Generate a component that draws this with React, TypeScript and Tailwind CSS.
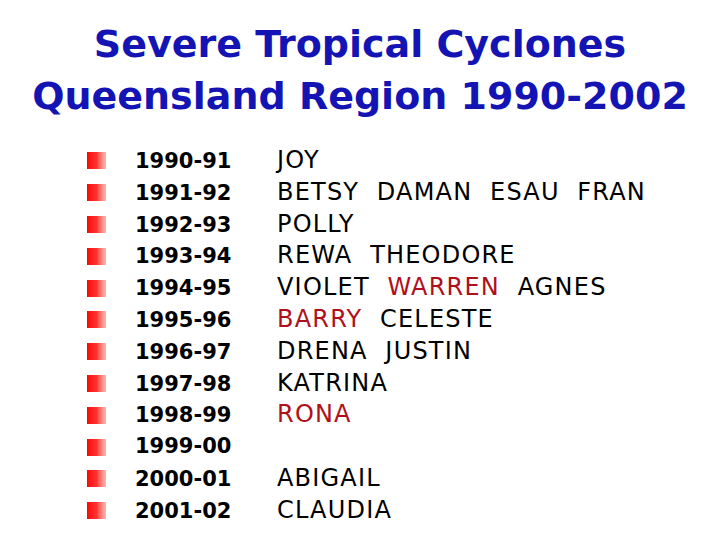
import React from "react";

const rows: { year: string; names: { t: string; red?: boolean }[] }[] = [
  { year: "1990-91", names: [{ t: "JOY" }] },
  { year: "1991-92", names: [{ t: "BETSY  DAMAN  ESAU  FRAN" }] },
  { year: "1992-93", names: [{ t: "POLLY" }] },
  { year: "1993-94", names: [{ t: "REWA  THEODORE" }] },
  { year: "1994-95", names: [{ t: "VIOLET  " }, { t: "WARREN", red: true }, { t: "  AGNES" }] },
  { year: "1995-96", names: [{ t: "BARRY", red: true }, { t: "  CELESTE" }] },
  { year: "1996-97", names: [{ t: "DRENA  JUSTIN" }] },
  { year: "1997-98", names: [{ t: "KATRINA" }] },
  { year: "1998-99", names: [{ t: "RONA", red: true }] },
  { year: "1999-00", names: [] },
  { year: "2000-01", names: [{ t: "ABIGAIL" }] },
  { year: "2001-02", names: [{ t: "CLAUDIA" }] },
];

export default function App() {
  return (
    <div
      className="w-[720px] h-[540px] bg-white overflow-hidden flex flex-col"
      style={{ fontFamily: '"DejaVu Sans", sans-serif' }}
    >
      <div className="pt-[18px] flex flex-col items-center text-[#1414b4] text-[38px] leading-[52px] font-bold">
        <div>Severe Tropical Cyclones</div>
        <div>Queensland Region 1990-2002</div>
      </div>
      <div className="mt-[23px] pl-[87px] flex flex-col">
        {rows.map((r) => (
          <div key={r.year} className="flex items-baseline h-[31.8px] leading-[31.8px]">
            <div className="w-[19px] h-[17px] bg-gradient-to-r from-[#ff0000] via-[#ff3030] to-[#ffb4b4] self-center" />
            <div className="ml-[29px] w-[142px] text-[21px] font-bold text-black">{r.year}</div>
            <div className="text-[24px] tracking-[1.2px] text-black whitespace-pre">
              {r.names.map((n, i) => (
                <span key={i} className={n.red ? "text-[#b01018]" : ""}>
                  {n.t}
                </span>
              ))}
            </div>
          </div>
        ))}
      </div>
    </div>
  );
}
